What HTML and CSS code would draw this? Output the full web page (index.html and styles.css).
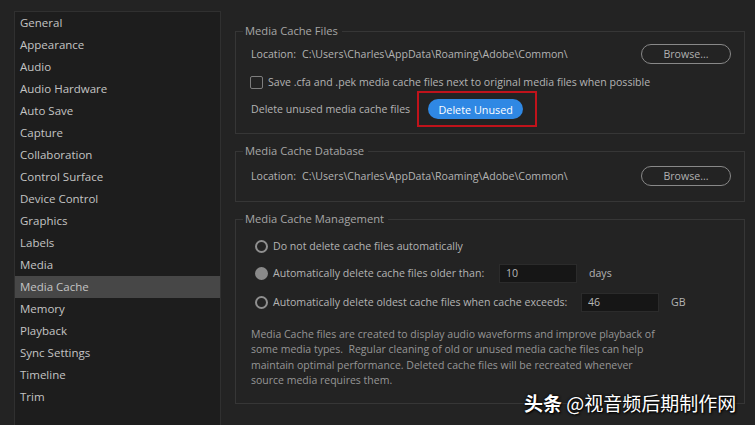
FILE: index.html
```html
<!DOCTYPE html>
<html lang="en">
<head>
    <meta charset="UTF-8">
    <meta name="viewport" content="width=device-width, initial-scale=1.0">
    <title>Preferences - Media Cache</title>
    <link rel="stylesheet" href="styles.css">
</head>
<body>
    <div class="prefs">
        <ul class="nav">
            <li>General</li>
            <li>Appearance</li>
            <li>Audio</li>
            <li>Audio Hardware</li>
            <li>Auto Save</li>
            <li>Capture</li>
            <li>Collaboration</li>
            <li>Control Surface</li>
            <li>Device Control</li>
            <li>Graphics</li>
            <li>Labels</li>
            <li>Media</li>
            <li class="active">Media Cache</li>
            <li>Memory</li>
            <li>Playback</li>
            <li>Sync Settings</li>
            <li>Timeline</li>
            <li>Trim</li>
        </ul>

        <div class="panel">
            <fieldset class="group files">
                <legend>Media Cache Files</legend>
                <div class="row loc">
                    <span class="label">Location:</span>
                    <span class="path">C:\Users\Charles\AppData\Roaming\Adobe\Common\</span>
                    <button class="browse">Browse...</button>
                </div>
                <label class="row check">
                    <span class="box"></span>
                    Save .cfa and .pek media cache files next to original media files when possible
                </label>
                <div class="row del">
                    <span>Delete unused media cache files</span>
                    <span class="mark"><button class="primary">Delete Unused</button></span>
                </div>
            </fieldset>

            <fieldset class="group db">
                <legend>Media Cache Database</legend>
                <div class="row loc">
                    <span class="label">Location:</span>
                    <span class="path">C:\Users\Charles\AppData\Roaming\Adobe\Common\</span>
                    <button class="browse">Browse...</button>
                </div>
            </fieldset>

            <fieldset class="group mgmt">
                <legend>Media Cache Management</legend>
                <div class="row opt first">
                    <span class="radio"></span>
                    <span>Do not delete cache files automatically</span>
                </div>
                <div class="row opt">
                    <span class="radio on"></span>
                    <span class="opt-text w1">Automatically delete cache files older than:</span>
                    <input class="num" type="text" value="10">
                    <span class="unit">days</span>
                </div>
                <div class="row opt last">
                    <span class="radio"></span>
                    <span class="opt-text w2">Automatically delete oldest cache files when cache exceeds:</span>
                    <input class="num" type="text" value="46">
                    <span class="unit">GB</span>
                </div>
                <p class="note">Media Cache files are created to display audio waveforms and improve playback of some media types.&nbsp; Regular cleaning of old or unused media cache files can help maintain optimal performance. Deleted cache files will be recreated whenever source media requires them.</p>
            </fieldset>
        </div>
    </div>

    <div class="watermark"><b>头条</b> @视音频后期制作网</div>
</body>
</html>
```

FILE: styles.css
```css
body {
    margin: 0;
    height: 425px;
    overflow: hidden;
    background-color: #232323;
    font-family: "Open Sans", "Noto Sans", sans-serif;
    font-size: 10.6px;
    color: #b3b3b3;
}
.prefs {
    display: flex;
    height: 100%;
    padding: 11px 0 0 14px;
    box-sizing: border-box;
}

/* left category list */
.nav {
    list-style: none;
    margin: 0;
    padding: 0;
    width: 205px;
    background-color: #1d1d1d;
    border: 1px solid #303030;
    border-bottom: none;
}
.nav li {
    height: 22px;
    line-height: 22px;
    padding-left: 5px;
    font-size: 11.5px;
    color: #c4c4c4;
}
.nav li.active {
    background-color: #474747;
}

/* right settings groups */
.panel {
    width: 510px;
    margin-left: 14px;
    padding-top: 12px;
}
.group {
    margin: 0 0 9px 0;
    padding: 0 0 0 15px;
    border: 1px solid #363636;
}
.group legend {
    margin-left: -8px;
    padding: 0 4px 0 2px;
    font-size: 11.2px;
    line-height: 16px;
    color: #a6a6a6;
}
.row {
    display: flex;
    align-items: center;
}
.loc {
    height: 20px;
    margin-top: 5px;
}
.loc .label {
    width: 51px;
}
.loc .path {
    flex: 1;
}
.browse {
    width: 90px;
    height: 20px;
    margin-right: 13px;
    padding: 0;
    background: none;
    border: 1px solid #888;
    border-radius: 10px;
    font-family: inherit;
    font-size: 10.6px;
    color: #b0b0b0;
}
.check {
    margin-top: 11px;
    height: 14px;
}
.box {
    width: 11px;
    height: 11px;
    margin-right: 5px;
    margin-left: -1px;
    border: 1px solid #7e7e7e;
    border-radius: 2px;
}
.del {
    margin-top: 2px;
    margin-bottom: 6px;
}
.mark {
    margin-left: 7px;
    padding: 6px 12px 6px 9px;
    border: 2px solid #c0131b;
}
.primary {
    display: block;
    width: 95px;
    height: 20px;
    padding: 0;
    border: none;
    border-radius: 10px;
    background-color: #2f88e4;
    font-family: inherit;
    font-size: 10.8px;
    color: #fff;
}
.db .loc {
    margin-top: 7px;
    margin-bottom: 15px;
}

.opt {
    height: 20px;
    margin-top: 7px;
    margin-left: 4px;
}
.opt.first {
    margin-top: 9px;
}
.opt.last {
    margin-top: 9px;
}
.radio {
    width: 9px;
    height: 9px;
    margin-right: 5px;
    border: 2px solid #8f8f8f;
    border-radius: 50%;
}
.radio.on {
    background-color: #8a8a8a;
    border-color: #8a8a8a;
}
.opt-text.w1 {
    width: 226px;
}
.opt-text.w2 {
    width: 308px;
}
.num {
    width: 78px;
    height: 19px;
    box-sizing: border-box;
    padding: 0 6px;
    background-color: #161616;
    border: 1px solid #2b2b2b;
    font-family: inherit;
    font-size: 10.6px;
    color: #b8b8b8;
}
.unit {
    margin-left: 12px;
}
.note {
    width: 415px;
    margin: 15px 0 15px 0;
    font-size: 10.5px;
    line-height: 15.3px;
    color: #969696;
}

/* overlay caption in the lower right corner */
.watermark {
    position: absolute;
    left: 524px;
    top: 389px;
    font-family: "Noto Sans CJK SC", sans-serif;
    font-size: 19px;
    color: #fff;
    text-shadow: 1px 1px 2px #000, 0 0 3px #000;
}
.watermark b {
    font-weight: 700;
}
```
